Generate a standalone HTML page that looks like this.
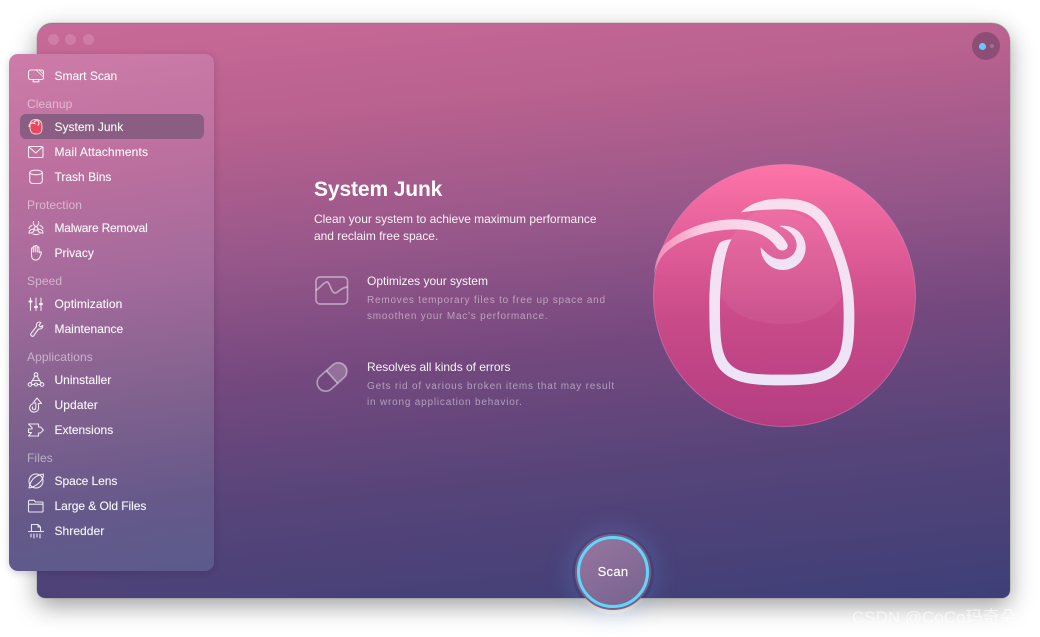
<!DOCTYPE html>
<html><head><meta charset="utf-8">
<style>
*{margin:0;padding:0;box-sizing:border-box}
html,body{width:1040px;height:637px;background:#fff;overflow:hidden;font-family:"Liberation Sans","Noto Sans CJK SC",sans-serif}
.abs{position:absolute}
#win{left:37px;top:23px;width:973px;height:575px;border-radius:15px 18px 8px 8px;background:linear-gradient(174deg,#c96a98 0%,#b9618f 18%,#97578a 38%,#76497f 55%,#564479 75%,#3e3f78 100%);box-shadow:0 8px 24px rgba(0,0,0,.38),0 0 1px rgba(0,0,0,.6);border-top:1px solid #8b7f85}
.dot{width:11px;height:11px;border-radius:50%;background:rgba(255,255,255,.14);top:34px}
#side{left:9px;top:54px;width:205px;height:517px;border-radius:9px;background:linear-gradient(172deg,#cd7ca8 0%,#bd709f 22%,#a26a9b 45%,#83628f 65%,#66598a 85%,#5b5a8c 100%);box-shadow:0 2px 8px rgba(40,20,60,.2)}
#act{left:20px;top:114px;width:184px;height:25px;border-radius:6px;background:#8a5d82}
.it{position:absolute;left:54.5px;font-size:12px;line-height:16px;color:#fff;white-space:nowrap;opacity:.96;-webkit-text-stroke:.15px rgba(255,255,255,.7)}
.hd{position:absolute;left:27px;font-size:12px;letter-spacing:.1px;line-height:16px;color:rgba(255,255,255,.5);white-space:nowrap}
svg.i{position:absolute;left:25px;width:22px;height:22px;fill:none;stroke:rgba(255,255,255,.85);stroke-width:1.1;stroke-linecap:round;stroke-linejoin:round}
.t{position:absolute;white-space:nowrap;color:#fff}
.sub{font-size:10px;letter-spacing:.78px;line-height:16px;color:rgba(255,255,255,.47)}
</style></head><body>
<div id="win" class="abs"></div>
<div class="abs dot" style="left:48px"></div>
<div class="abs dot" style="left:65px"></div>
<div class="abs dot" style="left:83px"></div>
<div class="abs" style="left:972px;top:32px;width:28px;height:28px;border-radius:50%;background:#8c4e77"></div>
<div class="abs" style="left:979px;top:42.5px;width:7px;height:7px;border-radius:50%;background:#69c8fb"></div>
<div class="abs" style="left:990px;top:44px;width:4px;height:4px;border-radius:50%;background:#a0728f"></div>

<div id="side" class="abs"></div>
<div id="act" class="abs"></div>

<svg class="i" style="top:65px" viewBox="0 0 22 22"><path d="M6 5 H16.500 Q18.500 5 18.500 7 V12.500 Q18.500 14.500 16.500 14.500 H5.500 Q3.500 14.500 3.500 12.500 V7.500 Q3.500 5 6 5Z"/><path d="M8.500 14.500 L8 16.800 H14 L13.500 14.500"/><path d="M11 5 L18 11.500 M14 5 L18.500 9" stroke-width=".8"/></svg>
<div class="it" style="top:68px">Smart Scan</div>
<div class="hd" style="top:96px">Cleanup</div>

<svg class="abs" style="left:26px;top:116px;width:20px;height:22px" viewBox="0 0 20 22"><path d="M4 10 C4 5 6 3.500 10 3.500 C14 3.500 16 6 16 11 C16 16 15 18 10 18 C5 18 4 15 4 10Z" fill="#e8475c" stroke="#f3d4d8" stroke-width="1"/><path d="M3 11 C3 7 6 6 9.500 8 M8 7 a2.500 2.500 0 1 1 3.500 2.500" fill="none" stroke="#fbe6e6" stroke-width="1.100"/></svg>
<div class="it" style="top:119px">System Junk</div>

<svg class="i" style="top:141px" viewBox="0 0 22 22"><rect x="3.500" y="5.500" width="14.500" height="11" rx="1.300"/><path d="M4 6 L10.750 12 L17.500 6"/></svg>
<div class="it" style="top:144px;letter-spacing:.14px">Mail Attachments</div>

<svg class="i" style="top:166px" viewBox="0 0 22 22"><ellipse cx="11" cy="6.500" rx="6.300" ry="2.300"/><path d="M4.700 6.500 V14.500 Q4.700 17.500 8 17.500 H14 Q17.300 17.500 17.300 14.500 V6.500"/></svg>
<div class="it" style="top:169px">Trash Bins</div>

<div class="hd" style="top:197px">Protection</div>
<svg class="i" style="top:217px" viewBox="0 0 22 22"><circle cx="11" cy="11.500" r="1.800"/><path d="M8.500 4.500 C7.800 6.500 8.800 8.500 11 9.500 C13.200 8.500 14.200 6.500 13.500 4.500 M4 16 C4 13.500 6 11.800 9.300 12.300 C9 14.800 7 16.500 4 16Z M18 16 C18 13.500 16 11.800 12.700 12.300 C13 14.800 15 16.500 18 16Z M7 8.500 C5.500 9 4.500 10 4 11.500 M15 8.500 C16.500 9 17.500 10 18 11.500 M8 17 C10 17.800 12 17.800 14 17"/></svg>
<div class="it" style="top:220px;letter-spacing:-.2px">Malware Removal</div>

<svg class="i" style="top:242px" viewBox="0 0 22 22"><path d="M6.500 12 V6.800 C6.500 5.500 8.300 5.500 8.300 6.800 V5 C8.300 3.700 10.200 3.700 10.200 5 V4.500 C10.200 3.200 12.200 3.200 12.200 4.500 V5.800 C12.200 4.700 14 4.700 14 5.800 V10.800 C14.500 9.500 16.800 9.500 16.300 11 C15.500 13 15 17.800 11 18 C7.500 18.200 6.500 16 6.500 12Z M8.300 7 V10 M10.200 5 V10 M12.200 5.500 V10"/></svg>
<div class="it" style="top:245px">Privacy</div>

<div class="hd" style="top:273px">Speed</div>
<svg class="i" style="top:293px" viewBox="0 0 22 22"><path d="M5.500 5 V17.500 M11 5 V17.500 M16 5 V17.500"/><path d="M4.600 8.500 H6.400 M10.100 14 H11.900 M15.100 11 H16.900" stroke-width="2.300"/></svg>
<div class="it" style="top:296px;letter-spacing:.1px">Optimization</div>

<svg class="i" style="top:318px" viewBox="0 0 22 22"><path d="M14.500 4 C12 4 11 6.500 11.500 8.500 L6 15.500 C5 17 7 19 8.500 18 L13.500 11 C16 11.500 18 10 17.700 7.500 L15.500 9 L14 7.500 L15.800 4.500 C15.300 4.200 15 4 14.500 4Z"/></svg>
<div class="it" style="top:321px">Maintenance</div>

<div class="hd" style="top:349px">Applications</div>
<svg class="i" style="top:369px" viewBox="0 0 22 22"><circle cx="11" cy="5.500" r="1.800"/><circle cx="5" cy="15.500" r="1.800"/><circle cx="17" cy="15.500" r="1.800"/><circle cx="11" cy="15.500" r="1.500"/><path d="M10 7 L6 14 M12 7 L16 14 M7 11.500 H15 M6.800 15.500 H9.500 M12.500 15.500 H15.200"/></svg>
<div class="it" style="top:372px">Uninstaller</div>

<svg class="i" style="top:394px" viewBox="0 0 22 22"><path d="M7.500 10 C4.500 11 4 14.500 5.500 16.500 C7.500 19 12.500 18.500 13.500 15 V9.500 H16.500 L12 4 L8 9 H10.800 V14 C10.500 16 8 16 7.500 14.500 V13"/></svg>
<div class="it" style="top:397px;letter-spacing:.1px">Updater</div>

<svg class="i" style="top:419px" viewBox="0 0 22 22"><path d="M3.500 5 H13.500 V8 H15.500 L18.500 11 L15.500 14 H13.500 V17 H3.500 L6.500 13.500 H3.500 V10 H7 V8.500 Z"/></svg>
<div class="it" style="top:422px">Extensions</div>

<div class="hd" style="top:450px">Files</div>
<svg class="i" style="top:470px" viewBox="0 0 22 22"><circle cx="11" cy="11" r="7"/><path d="M4 18 C8 17.500 12 15 15 12 C17 10 18.500 7 18.500 4 C15 4.500 11 6 8 9 C6 11.500 4.500 14.500 4 18Z"/></svg>
<div class="it" style="top:473px;letter-spacing:-.05px">Space Lens</div>

<svg class="i" style="top:495px" viewBox="0 0 22 22"><path d="M3.500 7 V16 Q3.500 17 4.500 17 H17 Q18 17 18 16 V8 Q18 7 17 7 H10.500 L9 5.300 H4.500 Q3.500 5.300 3.500 7Z M3.500 9.200 H18"/></svg>
<div class="it" style="top:498px;letter-spacing:-.05px">Large &amp; Old Files</div>

<svg class="i" style="top:520px" viewBox="0 0 22 22"><path d="M6.500 11 V4.500 H13 L15.500 7 V11 M3.500 11.500 H18.500 M13 4.500 V7 H15.500 M6 14 V17 M9 14 V18 M12 14 V17 M15 14 V18"/></svg>
<div class="it" style="top:523px;letter-spacing:.05px">Shredder</div>

<div class="t" style="left:314px;top:177px;font-size:21px;font-weight:700;line-height:26px;letter-spacing:-.12px">System Junk</div>
<div class="t" style="left:314px;top:211px;font-size:12px;line-height:17px;letter-spacing:-.02px;color:rgba(255,255,255,.92)">Clean your system to achieve maximum performance<br>and reclaim free space.</div>

<svg class="abs" style="left:314px;top:274px;width:36px;height:34px;fill:none;stroke:rgba(255,255,255,.45);stroke-width:1.700;stroke-linecap:round;stroke-linejoin:round" viewBox="0 0 36 34"><rect x="2" y="3" width="31.500" height="27" rx="4"/><path d="M2.500 16 C7 13 10 8 13 8 C16 8 17 19 21 19 C24 19 26 14 33 13"/></svg>
<div class="t" style="left:367px;top:273px;font-size:12px;line-height:16px;letter-spacing:-.02px;color:rgba(255,255,255,.94)">Optimizes your system</div>
<div class="t sub" style="left:367px;top:293px">Removes temporary files to free up space and<br>smoothen your Mac's performance.</div>

<svg class="abs" style="left:314px;top:358px;width:36px;height:36px" viewBox="0 0 36 36"><g transform="rotate(-42 18 19)"><rect x="1" y="10.500" width="34" height="17" rx="8.500" fill="none" stroke="rgba(255,255,255,.45)" stroke-width="1.700"/><path d="M18 11 H27 A8 8 0 0 1 27 27 H18Z" fill="rgba(255,255,255,.22)"/><path d="M18 10.500 V27.500" stroke="rgba(255,255,255,.45)" stroke-width="1.700"/></g></svg>
<div class="t" style="left:367px;top:359px;font-size:12px;line-height:16px;letter-spacing:-.02px;color:rgba(255,255,255,.94)">Resolves all kinds of errors</div>
<div class="t sub" style="left:367px;top:379px;letter-spacing:.8px">Gets rid of various broken items that may result<br>in wrong application behavior.</div>

<svg class="abs" style="left:640px;top:150px;width:290px;height:290px" viewBox="0 0 870 870">
<defs>
<linearGradient id="g1" x1="0" y1="0" x2="0" y2="1"><stop offset="0" stop-color="#fd74a8"/><stop offset=".28" stop-color="#e35f99"/><stop offset=".6" stop-color="#c84a88"/><stop offset="1" stop-color="#b43d82"/></linearGradient>
<linearGradient id="g2" x1="0" y1="0" x2="0" y2="1"><stop offset="0" stop-color="#f8dff0"/><stop offset="1" stop-color="#ece4f8"/></linearGradient>
<linearGradient id="g3" x1="0" y1="0" x2="1" y2="0"><stop offset="0" stop-color="#f9a6c8" stop-opacity=".65"/><stop offset=".35" stop-color="#fbc9df"/><stop offset="1" stop-color="#f6e6f4"/></linearGradient>
</defs>
<circle cx="433.500" cy="436.500" r="393" fill="url(#g1)" stroke="#f08cbc" stroke-opacity=".45" stroke-width="3"/>
<path d="M350 185 C390 175 500 170 555 255 C578 310 595 370 605 440 C570 500 500 522 425 522 C350 522 280 500 243 440 C250 380 255 320 270 270 C300 220 320 200 350 185Z" fill="#fff" fill-opacity=".055"/>
<path fill="url(#g2)" d="M303 187 C330 160 370 146 430 146 C515 146 555 175 585 245 C620 325 643 400 643 490 C643 570 640 625 605 660 C570 700 510 706 425 706 C335 706 280 700 242 660 C210 625 208 560 208 470 C208 390 215 320 238 280 C245 272 260 268 275 268 C258 290 240 380 240 470 C240 560 242 610 268 640 C295 670 340 674 425 674 C505 674 550 670 580 640 C608 612 611 560 611 490 C611 400 590 330 555 255 C530 200 495 178 430 178 C390 178 350 180 303 187Z"/>
<path fill="url(#g2)" d="M418 228 C465 222 497 255 497 292 C497 332 465 360 428 360 C392 360 362 330 362 292 C372 300 390 328 425 328 C450 328 470 310 470 285 C470 262 450 240 418 228Z"/>
<path fill="url(#g3)" d="M70 288 C130 230 220 205 300 208 C370 212 420 240 442 282 C448 300 425 308 412 295 C385 255 340 238 290 238 C200 238 110 270 72 312 C57 330 47 350 42 375 C44 340 55 310 70 288Z"/>
</svg>

<div class="abs" style="left:572px;top:532px;width:82px;height:82px;border-radius:50%;box-shadow:0 0 22px 6px rgba(110,170,240,.16)"></div>
<div class="abs" style="left:575px;top:534px;width:76px;height:76px;border-radius:50%;background:linear-gradient(150deg,#98769f,#76628f);border:3px solid #76608f"></div>
<div class="abs" style="left:577px;top:536px;width:72px;height:72px;border-radius:50%;border:3px solid #62d6f7"></div>
<div class="t" style="left:577px;width:72px;text-align:center;top:564px;font-size:13px;line-height:16px;letter-spacing:.3px;-webkit-text-stroke:.15px #fff">Scan</div>

<div class="t" style="left:852px;top:607px;font-size:17px;line-height:22px;color:rgba(255,255,255,.6)">CSDN @CoCo玛奇朵</div>
</body></html>
